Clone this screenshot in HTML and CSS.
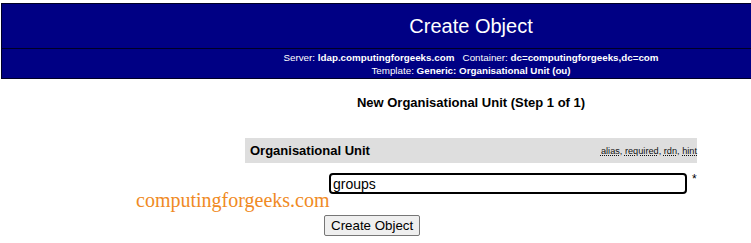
FILE: index.html
```
<!DOCTYPE html>
<html>
<head>
<meta charset="utf-8">
<link rel="stylesheet" href="styles.css">
</head>
<body>
<div class="viewport">
<div class="page">
  <div class="head">
    <div class="title">Create Object</div>
    <div class="sub">
      <div>Server: <b>ldap.computingforgeeks.com</b>&nbsp;&nbsp;&nbsp;Container: <b>dc=computingforgeeks,dc=com</b></div>
      <div>Template: <b>Generic: Organisational Unit (ou)</b></div>
    </div>
  </div>
  <div class="step">New Organisational Unit (Step 1 of 1)</div>
  <div class="form">
    <div class="bar">
      <span class="attr">Organisational Unit</span>
      <span class="flags"><abbr title="alias">alias</abbr>, <abbr title="required">required</abbr>, <abbr title="rdn">rdn</abbr>, <abbr title="hint">hint</abbr></span>
    </div>
    <div class="row">
      <span></span>
      <input class="field" type="text" value="groups">
      <span class="req">*</span>
    </div>
    <div class="actions">
      <button class="btn" type="button">Create Object</button>
    </div>
  </div>
  <div class="mark">computingforgeeks.com</div>
</div>
</div>
</body>
</html>
```
FILE: styles.css
```
html, body {
  margin: 0;
  overflow: hidden;
  background: #fff;
}
body {
  font-family: "Liberation Sans", Arial, sans-serif;
  color: #000;
}
.viewport {
  width: 100%;
  height: 243px;
  overflow: hidden;
}
.page {
  width: 940px;
  margin-left: 1px;
  padding-top: 3px;
  position: relative;
}
.head {
  background: #000084;
  border: 1px solid #000025;
  color: #fff;
  text-align: center;
}
.title {
  height: 44px;
  line-height: 44px;
  font-size: 20px;
}
.sub {
  border-top: 1px solid #000025;
  height: 26px;
  padding: 2px 0 1px;
  font-size: 9.8px;
  line-height: 13px;
}
.step {
  margin-top: 16px;
  text-align: center;
  font-weight: bold;
  font-size: 13px;
  line-height: 16px;
}
.form {
  width: 452px;
  margin: 27px auto 0;
}
.bar {
  background: #dedede;
  height: 25px;
  display: flex;
  align-items: center;
  justify-content: space-between;
  padding-left: 5px;
}
.attr {
  font-weight: bold;
  font-size: 13px;
}
.flags {
  font-size: 9.2px;
  color: #111;
}
abbr {
  text-decoration: underline dotted;
}
.row {
  margin-top: 10px;
  display: grid;
  grid-template-columns: 84px 358px 10px;
  align-items: start;
}
.field {
  box-sizing: border-box;
  width: 358px;
  height: 21px;
  border: 2px solid #000;
  border-radius: 4px;
  padding: 0 2px;
  font-family: "Liberation Sans", Arial, sans-serif;
  font-size: 14px;
  color: #000;
  outline: none;
  background: #fff;
}
.req {
  font-size: 12px;
  padding-left: 5px;
  line-height: 12px;
}
.actions {
  margin-top: 21px;
  padding-left: 79px;
}
.btn {
  font-family: "Liberation Sans", Arial, sans-serif;
  font-size: 13.33px;
  height: 21px;
  padding: 0 6px;
  background: #efefef;
  border: 1px solid #767676;
  border-radius: 2px;
  color: #000;
}
.mark {
  position: absolute;
  left: 135px;
  top: 188px;
  font-family: "Liberation Serif", "Times New Roman", serif;
  font-size: 20px;
  color: #f08a24;
  line-height: 24px;
}
```
